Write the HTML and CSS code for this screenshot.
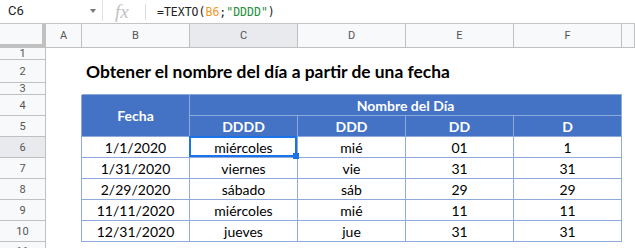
FILE: index.html
```html
<!DOCTYPE html>
<html lang="es">
<head>
    <meta charset="UTF-8">
    <title>TEXTO - nombre del día</title>
    <link rel="stylesheet" href="styles.css">
</head>
<body>
    <!-- barra de fórmulas -->
    <div class="formula-bar">
        <div class="name-box">C6<span class="caret"></span></div>
        <div class="fx">fx</div>
        <div class="formula">=TEXTO(<span class="ref">B6</span>;<span class="str">"DDDD"</span>)</div>
    </div>

    <!-- hoja -->
    <div class="sheet">
        <div class="corner"></div>
        <div class="col-head">A</div>
        <div class="col-head">B</div>
        <div class="col-head active">C</div>
        <div class="col-head">D</div>
        <div class="col-head">E</div>
        <div class="col-head">F</div>
        <div class="col-head"></div>

        <div class="rh">1</div>
        <div class="blank"></div>

        <div class="rh">2</div>
        <div class="cell"></div>
        <div class="title">Obtener el nombre del día a partir de una fecha</div>

        <div class="rh">3</div>
        <div class="cell"></div>
        <div class="tbl-top"></div>

        <div class="rh">4</div>
        <div class="cell edge"></div>
        <div class="hdr fecha">Fecha</div>
        <div class="hdr nombre">Nombre del Día</div>

        <div class="rh">5</div>
        <div class="cell edge"></div>
        <div class="hdr">DDDD</div>
        <div class="hdr">DDD</div>
        <div class="hdr">DD</div>
        <div class="hdr">D</div>

        <div class="rh active">6</div>
        <div class="cell edge"></div>
        <div class="td">1/1/2020</div>
        <div class="td sel">miércoles</div>
        <div class="td">mié</div>
        <div class="td">01</div>
        <div class="td">1</div>

        <div class="rh">7</div>
        <div class="cell edge"></div>
        <div class="td">1/31/2020</div>
        <div class="td">viernes</div>
        <div class="td">vie</div>
        <div class="td">31</div>
        <div class="td">31</div>

        <div class="rh">8</div>
        <div class="cell edge"></div>
        <div class="td">2/29/2020</div>
        <div class="td">sábado</div>
        <div class="td">sáb</div>
        <div class="td">29</div>
        <div class="td">29</div>

        <div class="rh">9</div>
        <div class="cell edge"></div>
        <div class="td">11/11/2020</div>
        <div class="td">miércoles</div>
        <div class="td">mié</div>
        <div class="td">11</div>
        <div class="td">11</div>

        <div class="rh">10</div>
        <div class="cell edge"></div>
        <div class="td">12/31/2020</div>
        <div class="td">jueves</div>
        <div class="td">jue</div>
        <div class="td">31</div>
        <div class="td">31</div>

        <div class="rh last">11</div>
        <div class="blank"></div>
    </div>
</body>
</html>
```

FILE: styles.css
```css
* {
    margin: 0;
    padding: 0;
    box-sizing: border-box;
}

body {
    width: 635px;
    height: 248px;
    overflow: hidden;
    background: #fff;
    font-family: Roboto, Arial, sans-serif;
}

/* barra de fórmulas */
.formula-bar {
    display: flex;
    align-items: center;
    height: 24px;
    border-bottom: 1px solid #c4c4c4;
}

.name-box {
    display: flex;
    align-items: center;
    align-self: flex-start;
    width: 103px;
    height: 21px;
    padding-left: 8px;
    border-right: 1px solid #e0e0e0;
    font-size: 13px;
    color: #222;
}

.caret {
    margin-left: auto;
    margin-right: 6px;
    border-left: 3px solid transparent;
    border-right: 3px solid transparent;
    border-top: 4px solid #777;
}

.fx {
    width: 43px;
    height: 16px;
    padding-left: 12px;
    border-right: 1px solid #dadce0;
    font-family: "Liberation Serif", serif;
    font-style: italic;
    font-size: 19px;
    line-height: 16px;
    color: #c2c2c2;
}

.formula {
    padding-left: 11px;
    font-family: "DejaVu Sans Mono", monospace;
    font-size: 11.5px;
    color: #222;
}

.formula .ref {
    color: #f4991f;
}

.formula .str {
    color: #1e8e3e;
}

/* hoja */
.sheet {
    display: grid;
    height: 224px;
    grid-template-columns: 46px 36px repeat(5, 108px) 1fr;
    grid-template-rows: 24px 12px 23px 12px repeat(7, 21px) 1fr;
}

.corner {
    background: #f8f9fa;
    border-right: 4px solid #c0c0c0;
    border-bottom: 4px solid #c0c0c0;
}

.col-head {
    display: flex;
    align-items: center;
    justify-content: center;
    background: #f8f9fa;
    border-right: 1px solid #c0c0c0;
    border-bottom: 1px solid #c0c0c0;
    font-size: 11px;
    color: #555;
}

.rh {
    grid-column: 1;
    display: flex;
    align-items: center;
    justify-content: center;
    overflow: hidden;
    background: #f8f9fa;
    border-right: 1px solid #c0c0c0;
    border-bottom: 1px solid #c0c0c0;
    font-size: 11px;
    color: #555;
}

.rh.last {
    align-items: flex-start;
    padding-top: 3px;
    border-bottom: none;
}

.col-head.active,
.rh.active {
    background: #e8eaed;
}

.blank {
    grid-column: 2 / -1;
}

.edge {
    border-right: 1px solid #8eaadb;
}

.title {
    grid-column: 3 / -1;
    display: flex;
    align-items: center;
    padding-left: 4px;
    font-family: Lato, sans-serif;
    font-weight: bold;
    font-size: 17.4px;
    color: #000;
    white-space: nowrap;
}

.tbl-top {
    grid-column: 3 / span 5;
    border-bottom: 1px solid #8eaadb;
}

/* tabla */
.hdr,
.td {
    display: flex;
    align-items: flex-end;
    justify-content: center;
    border-right: 1px solid #8eaadb;
    border-bottom: 1px solid #8eaadb;
    font-family: Lato, sans-serif;
    font-size: 14px;
    line-height: 19px;
    white-space: nowrap;
}

.hdr {
    background: #4472c4;
    color: #fff;
    font-weight: bold;
}

.hdr.fecha {
    grid-row: span 2;
    align-items: center;
}

.hdr.nombre {
    grid-column: span 4;
}

.td {
    color: #000;
}

/* celda seleccionada */
.sel {
    position: relative;
}

.sel::after {
    content: "";
    position: absolute;
    top: -1px;
    left: -1px;
    right: 0;
    bottom: 0;
    border: 2px solid #1a73e8;
}

.sel::before {
    content: "";
    position: absolute;
    right: -2px;
    bottom: -2px;
    width: 6px;
    height: 6px;
    background: #1a73e8;
    z-index: 1;
}
```
